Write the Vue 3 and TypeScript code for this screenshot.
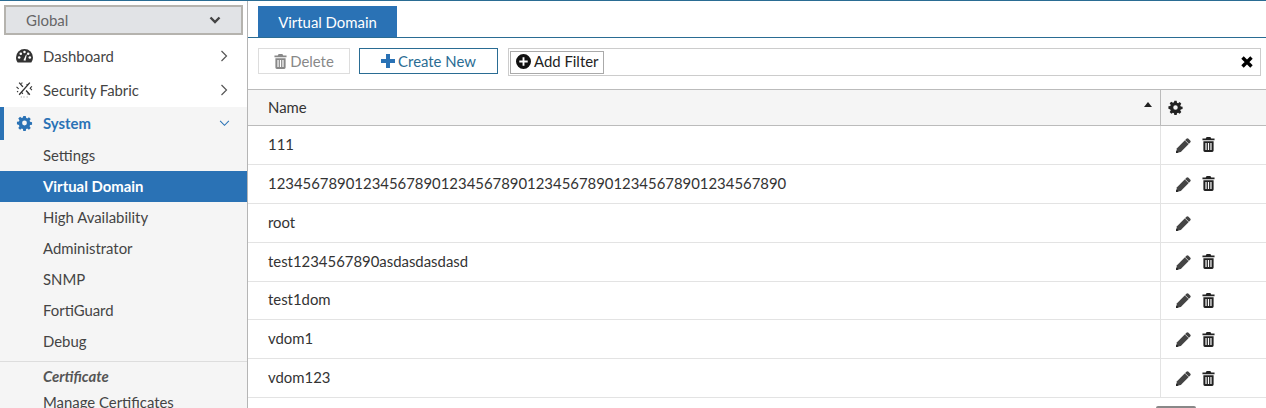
<script setup lang="ts">
const subItems = ['Settings', 'Virtual Domain', 'High Availability', 'Administrator', 'SNMP', 'FortiGuard', 'Debug']
const rows = [
  { name: '111', del: true },
  { name: '123456789012345678901234567890123456789012345678901234567890', del: true },
  { name: 'root', del: false },
  { name: 'test1234567890asdasdasdasd', del: true },
  { name: 'test1dom', del: true },
  { name: 'vdom1', del: true },
  { name: 'vdom123', del: true },
]
const pencil = 'M0 16l1-4.800L10.400 1.800a1.500 1.500 0 0 1 2.100 0l1.700 1.700a1.500 1.500 0 0 1 0 2.100L4.800 15Z'
const trash = 'M5 0h4l1 1.500h3.500V3.500H.5V1.500H4ZM1.500 4.500h11V14.500a1.500 1.500 0 0 1-1.500 1.500H3a1.500 1.500 0 0 1-1.500-1.500ZM3.700 6.500v7.500h1.300V6.500Zm2.650 0v7.500h1.300V6.500Zm2.650 0v7.500h1.300V6.500Z'
const gear = 'M6.600 0h2.800l.4 2.200 1.300.6 1.900-1.300 2 2-1.300 1.900.6 1.300 2.200.4v2.800l-2.200.4-.6 1.300 1.300 1.900-2 2-1.900-1.300-1.300.6-.4 2.200H6.600l-.4-2.200-1.300-.6-1.900 1.300-2-2 1.300-1.900-.6-1.300L-.5 9.400V6.600l2.200-.4.6-1.300L1 3l2-2 1.900 1.300 1.300-.6ZM8 5.300a2.700 2.700 0 1 0 0 5.400 2.700 2.700 0 0 0 0-5.400Z'
</script>

<template>
  <div class="page">
    <aside class="side">
      <div class="global">
        <span>Global</span>
        <svg class="caret" viewBox="0 0 12 8" width="12" height="8"><path d="M1.500 1.500 6 6l4.500-4.500" fill="none" stroke="#444" stroke-width="2.400" /></svg>
      </div>
      <nav class="menu">
        <div class="item first">
          <svg class="ico" viewBox="0 0 16 13" width="17" height="14">
            <path fill="#333" d="M8 0a8 8 0 0 0-8 8c0 1.800.6 3.400 1.600 4.700h12.800A8 8 0 0 0 16 8a8 8 0 0 0-8-8Z" />
            <g fill="#fff"><circle cx="3" cy="8" r="1.200" /><circle cx="4.500" cy="4.300" r="1.200" /><circle cx="8" cy="2.800" r="1.200" /><circle cx="11.500" cy="4.300" r="1.200" /><circle cx="13" cy="8" r="1.200" /><path d="M7 10.500 9.500 5l.6.300L8.900 11Z" /></g>
          </svg>
          <span class="label">Dashboard</span>
          <svg class="chev" viewBox="0 0 8 12" width="8" height="12"><path d="M1.500 1 6.500 6l-5 5" fill="none" stroke="#555" stroke-width="1.200" /></svg>
        </div>
        <div class="item">
          <svg class="ico fabric" viewBox="0 0 16 16" width="17" height="17">
            <g stroke="#333" fill="none">
              <path stroke-width="1.300" d="M3 1.500l3.500 4M9.500 9l3.500 4M13 1.500 3 13" />
              <path stroke-width="1" d="M.5 5.500l2 2M5 10.500l1.500 1.500M10 3l1 1M13 6.500l2 2M15 5l-1.500 1.500M6 1.500 5 2.500M1 9.500l1 1M11 12.500l1-1" />
              <path stroke-width="1" stroke="#999" d="M7 15h1M10 15h1M4.500 15h1" />
            </g>
          </svg>
          <span class="label">Security Fabric</span>
          <svg class="chev" viewBox="0 0 8 12" width="8" height="12"><path d="M1.500 1 6.500 6l-5 5" fill="none" stroke="#555" stroke-width="1.200" /></svg>
        </div>
        <div class="item active">
          <svg class="ico sys" viewBox="-1 -1 18 18" width="16" height="16"><path :d="gear" fill="#2a72b5" /></svg>
          <span class="label">System</span>
          <svg class="chev down" viewBox="0 0 12 8" width="11" height="7"><path d="M1 1l5 5 5-5" fill="none" stroke="#2a72b5" stroke-width="1.200" /></svg>
        </div>
      </nav>
      <div class="sub">
        <div v-for="s in subItems" :key="s" class="subitem" :class="{ on: s === 'Virtual Domain' }">{{ s }}</div>
        <div class="sep"></div>
        <div class="cert">Certificate</div>
        <div class="subitem last">Manage Certificates</div>
      </div>
    </aside>

    <main class="main">
      <div class="tabs"><div class="tab">Virtual Domain</div></div>
      <div class="toolbar">
        <button class="btn del">
          <svg viewBox="0 0 14 16" width="13" height="15"><path :d="trash" fill="#888" fill-rule="evenodd" /></svg>
          Delete
        </button>
        <button class="btn create">
          <svg viewBox="0 0 14 14" width="14" height="14"><path d="M5 0h4v5h5v4H9v5H5V9H0V5h5Z" fill="#2a72b5" /></svg>
          Create New
        </button>
        <div class="filter">
          <div class="addf">
            <svg viewBox="0 0 16 16" width="15" height="15"><path fill-rule="evenodd" d="M8 0a8 8 0 1 1 0 16A8 8 0 0 1 8 0ZM7 3.500v3.500H3.500v2H7v3.500h2V9h3.500V7H9V3.500Z" fill="#111" /></svg>
            <span>Add Filter</span>
          </div>
          <svg class="x" viewBox="0 0 12 12" width="12" height="12"><path d="M1.500 1.500l9 9M10.500 1.500l-9 9" stroke="#000" stroke-width="3.400" /></svg>
        </div>
      </div>
      <div class="thead">
        <div class="c-name">Name<span class="sort"></span></div>
        <div class="c-act gearcell"><svg viewBox="-1 -1 18 18" width="15" height="15"><path :d="gear" fill="#222" /></svg></div>
      </div>
      <div v-for="r in rows" :key="r.name" class="row">
        <div class="c-name">{{ r.name }}</div>
        <div class="c-act">
          <svg viewBox="0 0 15 16" width="15" height="16"><path :d="pencil" fill="#444" /><path d="M9 3.200l3.600 3.600" stroke="#fff" stroke-width=".7" /><path d="M0 16l.5-2.500 2 2Z" fill="#111" /></svg>
          <svg v-if="r.del" viewBox="0 0 14 16" width="13" height="15"><path :d="trash" fill="#222" fill-rule="evenodd" /></svg>
        </div>
      </div>
      <div class="peek"></div>
    </main>
  </div>
</template>

<style>
html, body { margin: 0; background: #fff; }
</style>

<style scoped>
.page { position: relative; display: flex; width: 1266px; height: 408px; overflow: hidden; font-family: Lato, "Liberation Sans", sans-serif; font-size: 14.900px; color: #444; border-top: 1px solid #2a6c93; box-sizing: border-box; background: #fff; }
.side { width: 248px; flex: none; box-sizing: border-box; border-right: 1px solid #b5b5b5; padding-top: 4px; background: #fff; }
.global { margin: 0 4px 0 4px; height: 30px; box-sizing: border-box; border: 2px solid #b5b3ae; background: #e1e3e6; display: flex; align-items: center; justify-content: space-between; padding: 0 20px 1px 20px; font-size: 15px; color: #666; }
.menu { margin-top: 5px; }
.item { position: relative; height: 33.333px; display: flex; align-items: center; padding-left: 16px; color: #444; }
.item.first { padding-bottom: 1px; box-sizing: border-box; }
.ico { flex: none; width: 17px; }
.label { margin-left: 10px; flex: 1; }
.chev { margin-right: 19px; }
.chev.down { margin-right: 17px; }
.item.active { background: #f5f5f5; color: #2a72b5; font-weight: 700; box-shadow: inset 4px 0 0 #2a72b5; }
.sub { background: #f5f5f5; height: 300px; }
.subitem { height: 31px; line-height: 31px; padding-left: 43px; color: #444; }
.subitem.on { background: #2a72b5; color: #fff; font-weight: 700; }
.sep { border-top: 1px solid #ddd; margin-top: 4px; }
.cert { font-style: italic; font-weight: 700; color: #555; padding-left: 43px; line-height: 28px; }
.subitem.last { line-height: 24px; }
.main { flex: 1; min-width: 0; position: relative; }
.tabs { height: 37px; box-sizing: border-box; padding: 5px 0 0 10px; border-bottom: 1px solid #2a6c93; }
.tab { width: 139px; height: 31px; line-height: 33px; text-align: center; background: #2a72b5; color: #fff; }
.toolbar { display: flex; align-items: flex-start; padding: 10px 5px 0 10px; height: 51px; box-sizing: border-box; }
.btn { height: 26px; box-sizing: border-box; background: #fff; font: inherit; display: flex; align-items: center; justify-content: center; gap: 3px; padding: 0; }
.del { width: 92px; border: 1px solid #ddd; color: #888; }
.create { width: 139px; margin-left: 9px; border: 1px solid #2a6c93; color: #2a6c93; }
.filter { flex: 1; margin-left: 10px; height: 28px; box-sizing: border-box; border: 1px solid #ccc; display: flex; align-items: center; justify-content: space-between; padding: 0 7px 0 1px; }
.addf { width: 94px; height: 23px; box-sizing: border-box; border: 1px solid #aaa; display: flex; align-items: center; gap: 3px; padding: 0 0 2px 5px; color: #222; }
.thead, .row { display: flex; box-sizing: border-box; }
.thead { height: 37px; background: #f5f5f5; border-top: 1px solid #bbb; border-bottom: 1px solid #bbb; align-items: stretch; color: #333; }
.row { height: 38.880px; border-bottom: 1px solid #e3e3e3; color: #333; }
.c-name { width: 912px; flex: none; position: relative; box-sizing: border-box; padding: 0 0 2px 20px; display: flex; align-items: center; }
.c-act { flex: 1; display: flex; align-items: center; gap: 11px; padding-left: 15px; border-left: 1px solid #e3e3e3; }
.thead .c-act { border-left-color: #bbb; }
.gearcell { padding-left: 7px; }
.sort { position: absolute; right: 8px; top: 12px; border: 4px solid transparent; border-top: 0; border-bottom: 5px solid #222; }
.peek { position: absolute; left: 908px; top: 405px; width: 40px; height: 3px; background: #888; border-radius: 2px 2px 0 0; }
</style>
